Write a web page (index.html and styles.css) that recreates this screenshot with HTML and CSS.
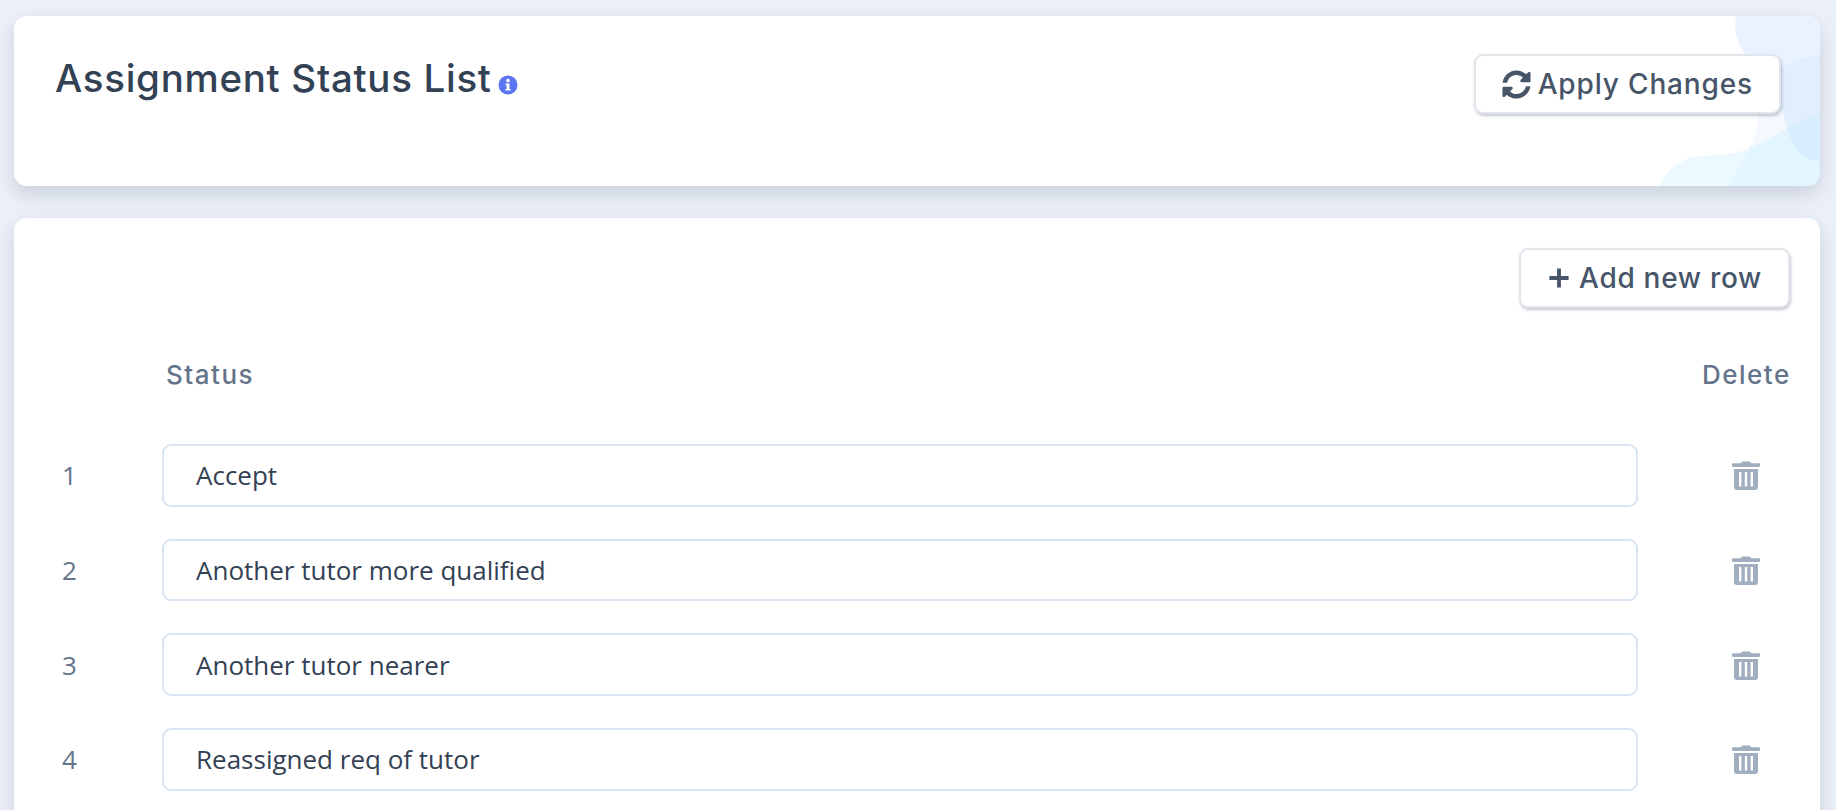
FILE: index.html
```html
<!DOCTYPE html>
<html lang="en">
<head>
<meta charset="utf-8">
<title>Assignment Status List</title>
<link rel="stylesheet" href="styles.css">
</head>
<body>
<main class="page">
  <section class="card header-card">
    <svg class="blobs" viewBox="0 0 175 170" width="175" height="170" aria-hidden="true">
      <path class="blob-a" d="M91 0C89 14 91 24 98 34C112 54 130 68 138 97C142 112 145 126 155 137C160 142 167 145 175 145V0Z"/>
      <path class="blob-b" d="M175 40C162 41 150 43 140 50C124 62 116 84 113 102C111 118 108 128 98 144C92 154 87 162 83 170H175Z"/>
      <path class="blob-c" d="M15 170C18 160 25 152 42 143C52 139 62 140 72 139C84 138 96 136 105 132C120 126 133 118 145 111C155 105 165 100 175 98V170Z"/>
    </svg>
    <div class="title-wrap">
      <h1 class="title">Assignment Status List</h1>
      <svg class="info" viewBox="0 0 20 20" width="20" height="20" aria-hidden="true">
        <circle cx="10" cy="10" r="9.5" fill="#5a75ef"/>
        <circle cx="10" cy="5.6" r="1.8" fill="#fff"/>
        <path d="M7.6 8.5h3.9v5.4h1.1v1.7H7.4v-1.7h1.2v-3.7h-1z" fill="#fff"/>
      </svg>
    </div>
    <button class="btn apply-btn" type="button">
      <svg class="btn-icon" viewBox="0 0 512 512" width="29" height="29" aria-hidden="true">
        <path d="M370.7 133.3C339.5 104 298.9 88 255.8 88c-77.5 0-144.400 53.100-162.900 126.900-1.300 5.400-6.100 9.100-11.600 9.100H24.100c-7.500 0-13.200-6.800-11.800-14.200C33.900 94.900 134.800 8 256 8c66.400 0 126.800 26.100 171.300 68.700L463 41c15.100-15.100 41-4.400 41 17V192c0 13.300-10.700 24-24 24H345.900c-21.400 0-32.100-25.900-17-41zM32 296h134.100c21.400 0 32.100 25.900 17 41l-41.800 41.800c31.300 29.300 71.900 45.300 115 45.200 77.400-.1 144.300-53.100 162.800-126.800 1.300-5.400 6.100-9.100 11.600-9.100h57.300c7.500 0 13.200 6.800 11.800 14.200C478.100 417.100 377.200 504 256 504c-66.400 0-126.800-26.100-171.300-68.700L49 471c-15.100 15.100-41 4.400-41-17V320c0-13.300 10.700-24 24-24z"/>
      </svg>
      <span>Apply Changes</span>
    </button>
  </section>

  <section class="card list-card">
    <div class="toolbar">
      <button class="btn add-btn" type="button">
        <svg class="btn-icon" viewBox="0 0 20 20" width="24" height="24" aria-hidden="true">
          <path d="M8.400 2h3.200v6.400H18v3.200h-6.400V18H8.400v-6.400H2V8.400h6.400z"/>
        </svg>
        <span>Add new row</span>
      </button>
    </div>
    <div class="table">
      <div class="row head">
        <span></span>
        <span class="head-status">Status</span>
        <span class="head-delete">Delete</span>
      </div>
      <div class="row">
        <span class="num">1</span>
        <input class="field" type="text" value="Accept">
        <button class="trash" type="button"><svg viewBox="0 0 28 30" width="28" height="30" aria-hidden="true"><use href="#trash-icon"/></svg></button>
      </div>
      <div class="row">
        <span class="num">2</span>
        <input class="field" type="text" value="Another tutor more qualified">
        <button class="trash" type="button"><svg viewBox="0 0 28 30" width="28" height="30" aria-hidden="true"><use href="#trash-icon"/></svg></button>
      </div>
      <div class="row">
        <span class="num">3</span>
        <input class="field" type="text" value="Another tutor nearer">
        <button class="trash" type="button"><svg viewBox="0 0 28 30" width="28" height="30" aria-hidden="true"><use href="#trash-icon"/></svg></button>
      </div>
      <div class="row">
        <span class="num">4</span>
        <input class="field" type="text" value="Reassigned req of tutor">
        <button class="trash" type="button"><svg viewBox="0 0 28 30" width="28" height="30" aria-hidden="true"><use href="#trash-icon"/></svg></button>
      </div>
    </div>
  </section>
</main>
<svg class="defs" width="0" height="0" aria-hidden="true">
  <symbol id="trash-icon" viewBox="0 0 28 30">
    <path fill-rule="evenodd" d="M10 1.500h8l1.200 1.800H27a1 1 0 0 1 1 1V6a1 1 0 0 1-1 1H1A1 1 0 0 1 0 6V4.300a1 1 0 0 1 1-1h7.800zM2 9h24v18a3 3 0 0 1-3 3H5a3 3 0 0 1-3-3zM7 12v14.500h2.400V12zM12.800 12v14.500h2.400V12zM18.600 12v14.500H21V12z"/>
  </symbol>
</svg>
</body>
</html>
```
FILE: styles.css
```css
* { box-sizing: border-box; }
html, body { margin: 0; height: 100%; overflow: hidden; }
body {
  background: #ebf0f9;
  font-family: "Open Sans", sans-serif;
  color: #334155;
}
.page {
  display: flex;
  flex-direction: column;
  gap: 32px;
  padding: 16px 16px 0 14px;
}
.card {
  background: #fff;
  border-radius: 13px;
}
.header-card {
  position: relative;
  height: 170px;
  padding: 38px 39px 0 41px;
  display: flex;
  justify-content: space-between;
  align-items: flex-start;
  overflow: hidden;
  box-shadow: 0 8px 20px rgba(71, 85, 105, 0.2);
}
.blobs {
  position: absolute;
  right: 0;
  bottom: 0;
}
.blob-a { fill: #e9f2fe; }
.blob-b { fill: #c3e1ff; opacity: 0.2; }
.blob-c { fill: #c0eeff; opacity: 0.3; }
.title-wrap {
  display: flex;
  align-items: center;
  gap: 6px;
  padding-top: 2px;
}
.title {
  margin: 0;
  font-family: Inter, sans-serif;
  font-size: 38.5px;
  line-height: 44px;
  font-weight: 500;
  letter-spacing: 0.7px;
  color: #334155;
}
.info { margin-top: 14px; }
.btn {
  position: relative;
  display: inline-flex;
  align-items: center;
  gap: 7px;
  height: 60px;
  background: #fff;
  border: 2px solid #e2e6ec;
  border-radius: 9px;
  box-shadow: 1px 2px 3px rgba(71, 85, 105, 0.32);
  font-family: Inter, sans-serif;
  font-size: 28px;
  font-weight: 500;
  letter-spacing: 0.85px;
  color: #475569;
  padding: 0 26px;
}
.btn-icon { fill: #475569; flex: none; }
.add-btn { gap: 8px; letter-spacing: 0.7px; }
.list-card {
  height: 700px;
  padding: 30px 30px 0 0;
  box-shadow: 0 8px 20px rgba(71, 85, 105, 0.2);
}
.toolbar {
  display: flex;
  justify-content: flex-end;
}
.table {
  display: flex;
  flex-direction: column;
  gap: 32px;
  margin-top: 49px;
}
.row {
  display: grid;
  grid-template-columns: 148px 1fr 152px;
  align-items: center;
}
.row > :last-child { margin-left: 64px; }
.head { margin-bottom: 21px; height: 34px; }
.head-status, .head-delete {
  font-family: Inter, sans-serif;
  font-size: 26px;
  font-weight: 500;
  letter-spacing: 1.5px;
  color: #64748b;
  white-space: nowrap;
}
.head-status { padding-left: 4px; }
.num {
  padding-left: 48px;
  font-size: 26px;
  color: #64748b;
}
.field {
  width: 100%;
  height: 62.7px;
  padding: 0 32px;
  border: 2px solid #d9e4f2;
  border-radius: 9px;
  background: #fff;
  font-family: "Open Sans", sans-serif;
  font-size: 26px;
  color: #334155;
  outline: none;
}
.trash {
  display: flex;
  justify-content: center;
  padding: 0;
  background: none;
  border: 0;
}
.trash svg { fill: #a0aec0; }
.defs { position: absolute; }
```
